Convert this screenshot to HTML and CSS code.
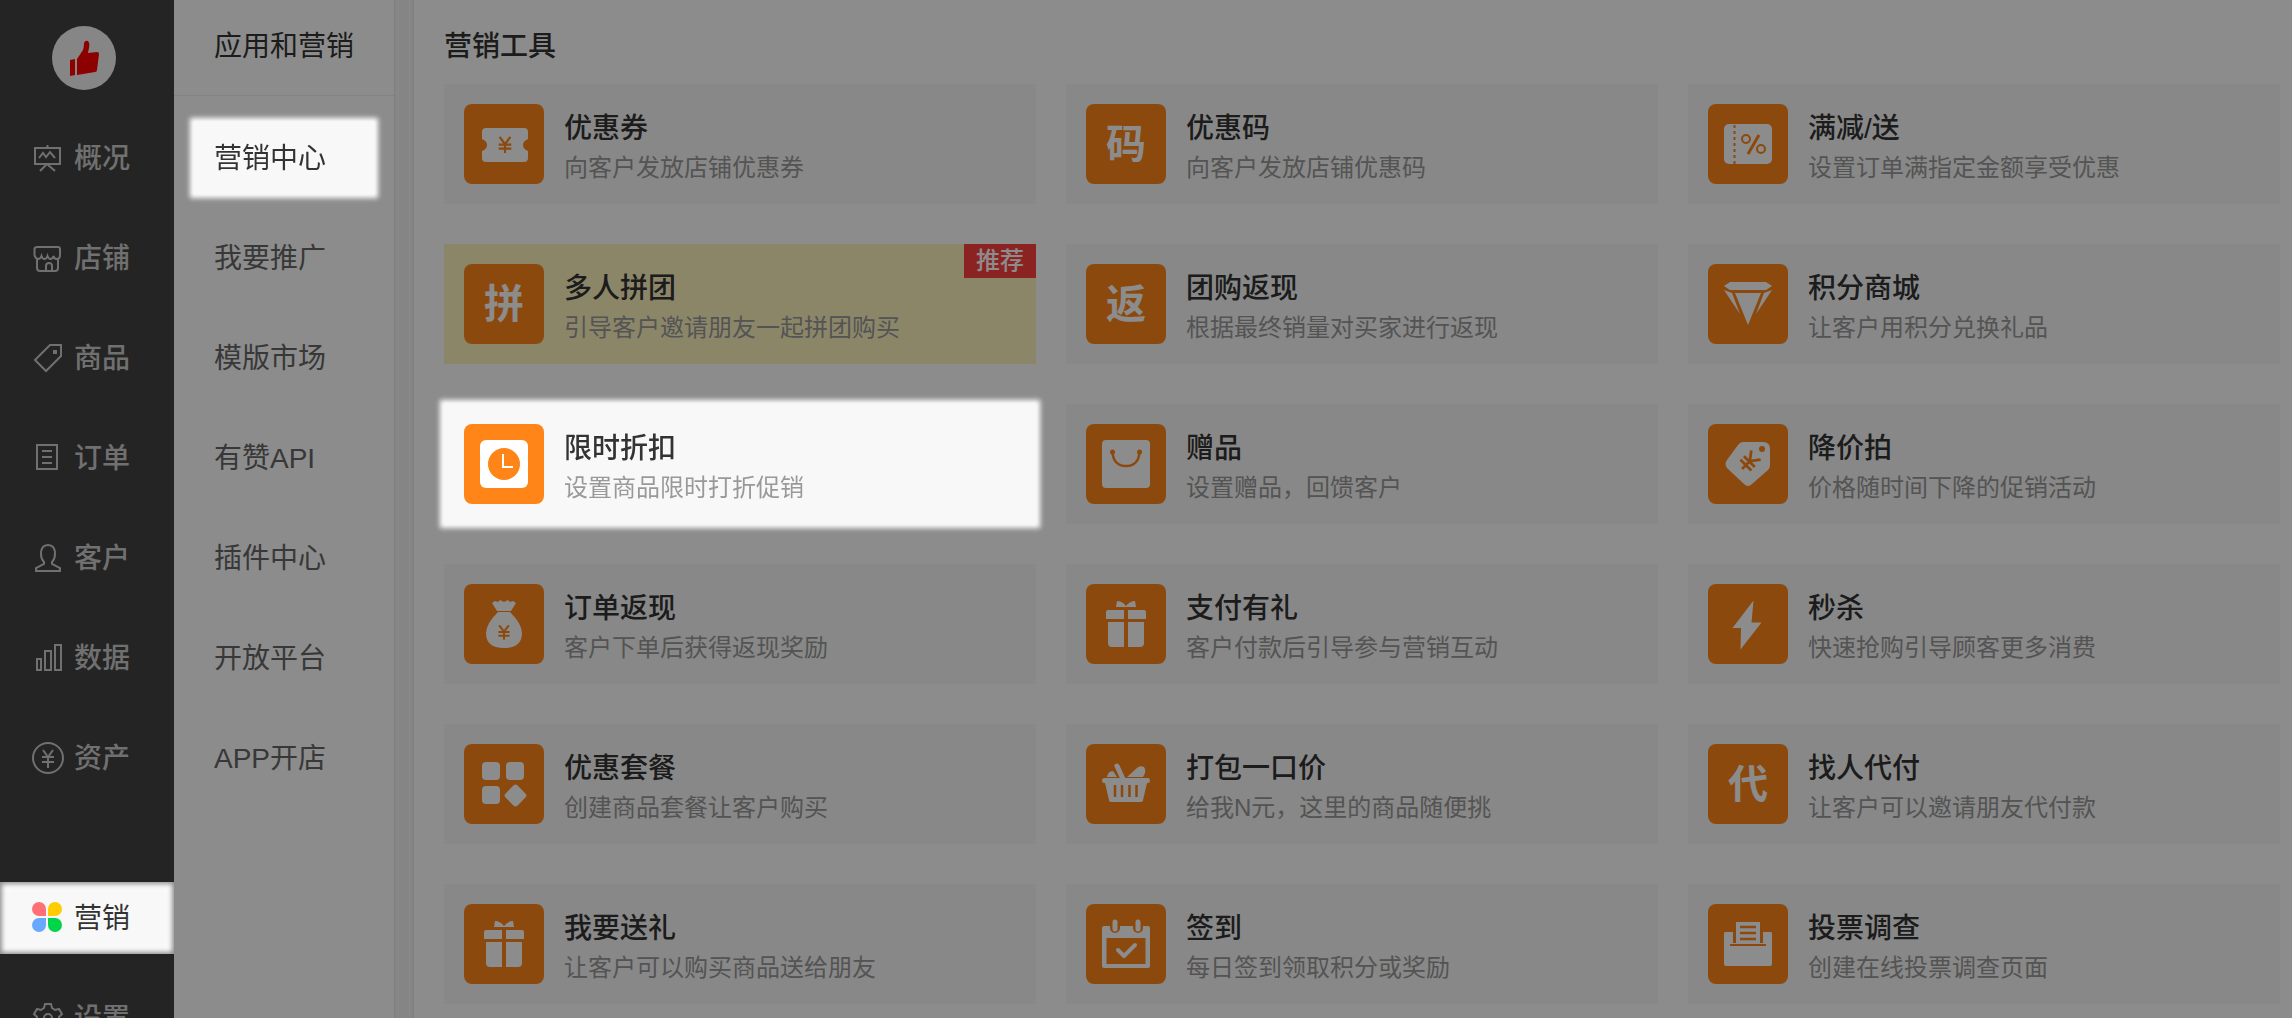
FILE: index.html
```html
<!DOCTYPE html>
<html lang="zh-CN">

<head>
  <meta charset="utf-8">
  <title>营销中心 - 应用和营销</title>
  <meta name="viewport" content="width=device-width,initial-scale=1">
  <link rel="stylesheet" href="styles.css">
</head>

<body>
  <!-- shared icon shapes -->
  <svg class="svg-defs" aria-hidden="true">
    <symbol id="yen" viewBox="0 0 20 20">
      <path d="M4 1l6 8 6-8M10 9v10M3 9.500h14M3 14h14" fill="none" stroke="currentColor" stroke-width="2.500" />
    </symbol>
    <symbol id="gift" viewBox="0 0 80 80">
      <path d="M30 23l1-6q5 0 9 5 4-5 9-5l1 6z" />
      <path d="M22 26h16v9H20v-7q0-2 2-2zM42 26h16q2 0 2 2v7H42zM22 38h16v25H26q-4 0-4-4zM42 38h16v21q0 4-4 4H42z" />
    </symbol>
  </svg>

  <div class="layout">
    <nav class="sidebar" aria-label="主菜单">
      <a class="logo" href="#" aria-label="首页">
        <svg viewBox="0 0 64 64">
          <path d="M18 34l5-1v16l-5 1zM25 33l6-9q1-3 1-7 1-3 4-2 2 2 1 7l-1 5 9-1q2 0 2 2l-2 16q0 2-2 2l-18 3z" />
        </svg>
      </a>
      <a class="nav-item" href="#">
        <svg viewBox="0 0 32 32"><path d="M3 6h25v16H3zM15.500 3v3M7 16l4-5 3 4 4-5 5 6M15 22l-7 7M15 22l8 7" /></svg>
        <span>概况</span>
      </a>
      <a class="nav-item" href="#">
        <svg viewBox="0 0 32 32"><path d="M5 5h21q2 0 2 2v6q0 4-3 4t-3.500-3q-1 3-3 3t-3-3q-1 3-3 3t-3-3q-1 3-3.500 3t-3.500-4V7q0-2 3-2zM5 17v9q0 3 3 3h15q3 0 3-3v-9M14 29v-5q0-3 3-3t3 3v5" /></svg>
        <span>店铺</span>
      </a>
      <a class="nav-item" href="#">
        <svg viewBox="0 0 32 32"><path d="M3 18L18 3h11v11L14 29z" /><path class="solid" d="M21 8h4v4h-4z" /></svg>
        <span>商品</span>
      </a>
      <a class="nav-item" href="#">
        <svg viewBox="0 0 32 32"><path d="M5 3h20v24H5zM10 9h10M10 15h10M10 21h10" /></svg>
        <span>订单</span>
      </a>
      <a class="nav-item" href="#">
        <svg viewBox="0 0 32 32"><path d="M12 20q-3-3-3-8 0-9 7-9t7 9q0 5-3 8v2l8 4v3H4v-3l8-4z" /></svg>
        <span>客户</span>
      </a>
      <a class="nav-item" href="#">
        <svg viewBox="0 0 32 32"><path d="M5 17h4v11H5zM13 9h6v19h-6zM23 3h6v25h-6z" /></svg>
        <span>数据</span>
      </a>
      <a class="nav-item" href="#">
        <svg viewBox="0 0 32 32"><circle cx="16" cy="16" r="15" /><path d="M11 8l5 7 5-7M16 15v11M10 15h12M10 20h12" /></svg>
        <span>资产</span>
      </a>
      <a class="nav-item nav-item-bottom spotlight-inner" href="#" aria-current="page">
        <svg class="petals" viewBox="0 0 32 32">
          <path fill="#ff6f76" d="M7 0a7 7 0 0 1 7 7v7H7A7 7 0 0 1 7 0z" />
          <path fill="#ffcc00" d="M23 0a7 7 0 0 1 0 14h-7V7a7 7 0 0 1 7-7z" />
          <path fill="#68a9ff" d="M7 16h7v7a7 7 0 1 1-7-7z" />
          <path fill="#00d549" d="M16 16h7a7 7 0 1 1-7 7z" />
        </svg>
        <span>营销</span>
      </a>
      <a class="nav-item" href="#">
        <svg viewBox="0 0 32 32"><path d="M13 2h6l1 4 3 2 4-1 3 5-3 3v3l3 3-3 5-4-1-3 2-1 4h-6l-1-4-3-2-4 1-3-5 3-3v-3l-3-3 3-5 4 1 3-2z" /><circle cx="16" cy="16" r="4" /></svg>
        <span>设置</span>
      </a>
    </nav>

    <nav class="submenu" aria-label="应用和营销">
      <h2 class="submenu-title">应用和营销</h2>
      <a class="submenu-item spotlight" href="#" aria-current="page">营销中心</a>
      <a class="submenu-item" href="#">我要推广</a>
      <a class="submenu-item" href="#">模版市场</a>
      <a class="submenu-item" href="#">有赞API</a>
      <a class="submenu-item" href="#">插件中心</a>
      <a class="submenu-item" href="#">开放平台</a>
      <a class="submenu-item" href="#">APP开店</a>
    </nav>

    <main class="content">
      <h1 class="content-title">营销工具</h1>
      <div class="tools">
        <a class="tool" href="#">
          <svg class="tool-icon" viewBox="0 0 80 80">
            <path d="M22 24h38q4 0 4 4v7q-5 2-5 6t5 6v7q0 4-4 4H22q-4 0-4-4v-7q5-2 5-6t-5-6v-7q0-4 4-4z" />
            <use href="#yen" x="32" y="32" width="18" height="18" />
          </svg>
          <div class="tool-text"><h3>优惠券</h3><p>向客户发放店铺优惠券</p></div>
        </a>
        <a class="tool" href="#">
          <span class="tool-icon">码</span>
          <div class="tool-text"><h3>优惠码</h3><p>向客户发放店铺优惠码</p></div>
        </a>
        <a class="tool" href="#">
          <svg class="tool-icon" viewBox="0 0 80 80">
            <rect x="16" y="20" width="48" height="40" rx="5" />
            <path class="cut" stroke-width="2" stroke-dasharray="3 3" d="M26.500 21v39" />
            <g class="cut" stroke-width="2"><circle cx="38" cy="35" r="4" /><circle cx="53" cy="45" r="4" /><path stroke-width="3" d="M51 31L40 50" /></g>
          </svg>
          <div class="tool-text"><h3>满减/送</h3><p>设置订单满指定金额享受优惠</p></div>
        </a>

        <a class="tool tool-recommend" href="#">
          <span class="tool-icon">拼</span>
          <div class="tool-text"><h3>多人拼团</h3><p>引导客户邀请朋友一起拼团购买</p></div>
          <em class="badge">推荐</em>
        </a>
        <a class="tool" href="#">
          <span class="tool-icon">返</span>
          <div class="tool-text"><h3>团购返现</h3><p>根据最终销量对买家进行返现</p></div>
        </a>
        <a class="tool" href="#">
          <svg class="tool-icon" viewBox="0 0 80 80">
            <path d="M22 18h36l6 4-6 4H22l-6-4zM27 29h26L40 61zM16 26l8 3 8 21zM64 26l-8 3-8 21z" />
          </svg>
          <div class="tool-text"><h3>积分商城</h3><p>让客户用积分兑换礼品</p></div>
        </a>

        <a class="tool spotlight" href="#">
          <svg class="tool-icon" viewBox="0 0 80 80">
            <rect x="16" y="16" width="48" height="48" rx="6" />
            <circle class="hole" cx="40" cy="40" r="16" />
            <path fill="none" stroke="#fff" stroke-width="2" d="M39 30v13h10" />
          </svg>
          <div class="tool-text"><h3>限时折扣</h3><p>设置商品限时打折促销</p></div>
        </a>
        <a class="tool" href="#">
          <svg class="tool-icon" viewBox="0 0 80 80">
            <rect x="16" y="16" width="48" height="48" rx="4" />
            <path class="cut" stroke-width="2.500" d="M26.500 28q1 14 13.500 14t13.500-14" />
            <circle class="hole" cx="26.500" cy="28" r="2.500" /><circle class="hole" cx="53.500" cy="28" r="2.500" />
          </svg>
          <div class="tool-text"><h3>赠品</h3><p>设置赠品，回馈客户</p></div>
        </a>
        <a class="tool" href="#">
          <svg class="tool-icon" viewBox="0 0 80 80">
            <path d="M35 18h20q7 0 7 7v16q0 3-2 5L44 60q-4 4-8 0L19 44q-3-4 0-8l11-15q2-3 5-3z" />
            <circle class="hole" cx="54" cy="25" r="3" />
            <g transform="rotate(45 41 38)"><use href="#yen" x="30" y="27" width="22" height="22" /></g>
          </svg>
          <div class="tool-text"><h3>降价拍</h3><p>价格随时间下降的促销活动</p></div>
        </a>

        <a class="tool" href="#">
          <svg class="tool-icon" viewBox="0 0 80 80">
            <path d="M28 19l3-2 3 1 2-2 4 2 4-2 2 2 3-1 3 2-5 8H33zM34 28h12q12 12 12 21 0 15-18 15T22 49q0-9 12-21z" />
            <use href="#yen" x="32" y="40" width="16" height="17" />
          </svg>
          <div class="tool-text"><h3>订单返现</h3><p>客户下单后获得返现奖励</p></div>
        </a>
        <a class="tool" href="#">
          <svg class="tool-icon" viewBox="0 0 80 80"><use href="#gift" /></svg>
          <div class="tool-text"><h3>支付有礼</h3><p>客户付款后引导参与营销互动</p></div>
        </a>
        <a class="tool" href="#">
          <svg class="tool-icon" viewBox="0 0 80 80"><path d="M45.500 16.500L24.500 44H33l-.5 21.500 21-27H43.500z" /></svg>
          <div class="tool-text"><h3>秒杀</h3><p>快速抢购引导顾客更多消费</p></div>
        </a>

        <a class="tool" href="#">
          <svg class="tool-icon" viewBox="0 0 80 80">
            <rect x="18" y="18" width="18" height="18" rx="4" /><rect x="42" y="18" width="18" height="18" rx="4" />
            <rect x="18" y="42" width="18" height="18" rx="4" />
            <rect x="43" y="43" width="17" height="17" rx="3" transform="rotate(45 51.500 51.500)" />
          </svg>
          <div class="tool-text"><h3>优惠套餐</h3><p>创建商品套餐让客户购买</p></div>
        </a>
        <a class="tool" href="#">
          <svg class="tool-icon" viewBox="0 0 80 80">
            <path d="M18 34h44q2 0 2 2.500T62 39h-1l-4 17q0 2-3 2H26q-3 0-3-2l-4-17h-1q-2 0-2-2.500t2-2.500zM21 33q1-6 6-6l4 6zM41 33l10-9q3-3 7-1 3 4-1 10z" />
            <path fill="none" stroke="#fff" stroke-width="5" stroke-linecap="round" d="M31 22l6 13" />
            <path class="cut" stroke-width="2.500" d="M29 41v12M36 41v12M43.500 41v12M50.500 41v12" />
          </svg>
          <div class="tool-text"><h3>打包一口价</h3><p>给我N元，这里的商品随便挑</p></div>
        </a>
        <a class="tool" href="#">
          <span class="tool-icon">代</span>
          <div class="tool-text"><h3>找人代付</h3><p>让客户可以邀请朋友代付款</p></div>
        </a>

        <a class="tool" href="#">
          <svg class="tool-icon" viewBox="0 0 80 80"><use href="#gift" /></svg>
          <div class="tool-text"><h3>我要送礼</h3><p>让客户可以购买商品送给朋友</p></div>
        </a>
        <a class="tool" href="#">
          <svg class="tool-icon" viewBox="0 0 80 80">
            <rect x="16" y="22" width="48" height="42" rx="2" />
            <path class="hole" d="M20.500 34h39v26h-39z" />
            <path class="cut" stroke-width="10" stroke-linecap="round" d="M29 18v6M52 18v6" />
            <path fill="none" stroke="#fff" stroke-width="5" stroke-linecap="round" d="M29 18v7M52 18v7" />
            <path fill="none" stroke="#fff" stroke-width="4" stroke-linecap="round" stroke-linejoin="round" d="M32 46l6 6 11-11" />
          </svg>
          <div class="tool-text"><h3>签到</h3><p>每日签到领取积分或奖励</p></div>
        </a>
        <a class="tool" href="#">
          <svg class="tool-icon" viewBox="0 0 80 80">
            <path d="M17 28h8v11h30V28h8l1 1v31q0 2-2 2H18q-2 0-2-2V29z" />
            <path class="cut" stroke-width="2" d="M22 41h36" />
            <path d="M28 18h24v22H28z" />
            <path class="cut" stroke-width="2.500" d="M32 23h16M32 29h16M32 35h16" />
          </svg>
          <div class="tool-text"><h3>投票调查</h3><p>创建在线投票调查页面</p></div>
        </a>
      </div>
    </main>
  </div>

  <div class="mask"></div>
</body>

</html>
```
FILE: styles.css
```css
* {
  box-sizing: border-box;
}

body {
  margin: 0;
  height: 100vh;
  overflow: hidden;
  background: #fff;
  color: #333;
  font-family: "Liberation Sans", "Noto Sans CJK SC", sans-serif;
  font-size: 28px;
  line-height: 40px;
}

a {
  color: inherit;
  text-decoration: none;
}

h1,
h2,
h3,
p {
  margin: 0;
}

.svg-defs {
  position: absolute;
  width: 0;
  height: 0;
}

.layout {
  display: flex;
  height: 100%;
}

/* dims the page, .spotlight elements stay above it */
.mask {
  position: fixed;
  top: 0;
  right: 0;
  bottom: 0;
  left: 0;
  z-index: 10;
  background: rgba(0, 0, 0, 0.45);
  pointer-events: none;
}

.spotlight {
  position: relative;
  z-index: 20;
  box-shadow: 0 0 5px 4px #fff;
}

.spotlight-inner {
  position: relative;
  z-index: 20;
  box-shadow: inset 0 0 5px 2px #8c8c8c, inset 0 0 6px 5px #fff;
}

/* sidebar */
.sidebar {
  display: flex;
  flex-direction: column;
  flex: none;
  gap: 28px;
  width: 174px;
  overflow: hidden;
  background: #424242;
  color: #ccc;
  font-weight: 500;
}

.logo {
  flex: none;
  width: 64px;
  height: 64px;
  margin: 26px 0 4px 52px;
  border-radius: 50%;
  background: #f4f4f4;
}

.logo svg {
  display: block;
  fill: #f00;
}

.nav-item {
  display: flex;
  flex: none;
  align-items: center;
  gap: 10px;
  height: 72px;
  padding-left: 32px;
}

.nav-item span {
  padding-top: 2px;
}

.nav-item svg {
  width: 32px;
  height: 32px;
  fill: none;
  stroke: currentColor;
  stroke-width: 2;
}

.nav-item .solid {
  fill: currentColor;
  stroke: none;
}

.nav-item .petals {
  stroke: none;
}

.nav-item-bottom {
  margin-top: 60px;
  background: #f8f8f8;
  color: #333;
  font-weight: 400;
}

/* second level menu */
.submenu {
  display: flex;
  flex-direction: column;
  flex: none;
  gap: 28px;
  width: 220px;
  color: #666;
}

.submenu-title {
  height: 96px;
  margin-bottom: -2px;
  padding: 27px 0 0 40px;
  border-bottom: 1px solid #eee;
  color: #333;
  font-size: 28px;
  font-weight: 400;
}

.submenu-item {
  margin: 0 20px;
  padding: 17px 20px 15px;
}

.submenu-item.spotlight {
  background: #f8f8f8;
  color: #333;
}

/* content, with the 20px groove on its left */
.content {
  flex: 1;
  padding: 27px 12px 0 50px;
  background: linear-gradient(90deg, #e8e8e8 0 1px, #f4f4f4 1px 4px, #fafafa 4px 5px, #f2f2f2 5px 15px, #fafafa 15px 16px, #f2f2f2 16px 19px, #e8e8e8 19px 20px, #fff 20px);
}

.content-title {
  margin-bottom: 17px;
  font-size: 28px;
  font-weight: 500;
}

.tools {
  display: grid;
  grid-template-columns: repeat(3, 1fr);
  gap: 40px 30px;
}

.tool {
  position: relative;
  display: flex;
  align-items: flex-start;
  gap: 20px;
  padding: 20px;
  background: #f8f8f8;
}

.tool-recommend {
  background: #fff4c0;
}

.tool-icon {
  flex: none;
  width: 80px;
  height: 80px;
  border-radius: 8px;
  background: #ff8519;
  color: #fff;
  fill: #fff;
  font-size: 40px;
  font-weight: 700;
  line-height: 80px;
  text-align: center;
}

.tool-icon use {
  color: #ff8519;
}

.tool-icon .hole {
  fill: #ff8519;
}

.tool-icon .cut {
  fill: none;
  stroke: #ff8519;
}

.tool-text h3 {
  font-size: 28px;
  font-weight: 500;
  line-height: 50px;
}

.tool-text p {
  color: #999;
  font-size: 24px;
  line-height: 28px;
}

.badge {
  position: absolute;
  top: 0;
  right: 0;
  padding: 0 12px;
  background: #ff4040;
  color: #fff;
  font-size: 24px;
  font-style: normal;
  font-weight: 500;
  line-height: 34px;
}
```
